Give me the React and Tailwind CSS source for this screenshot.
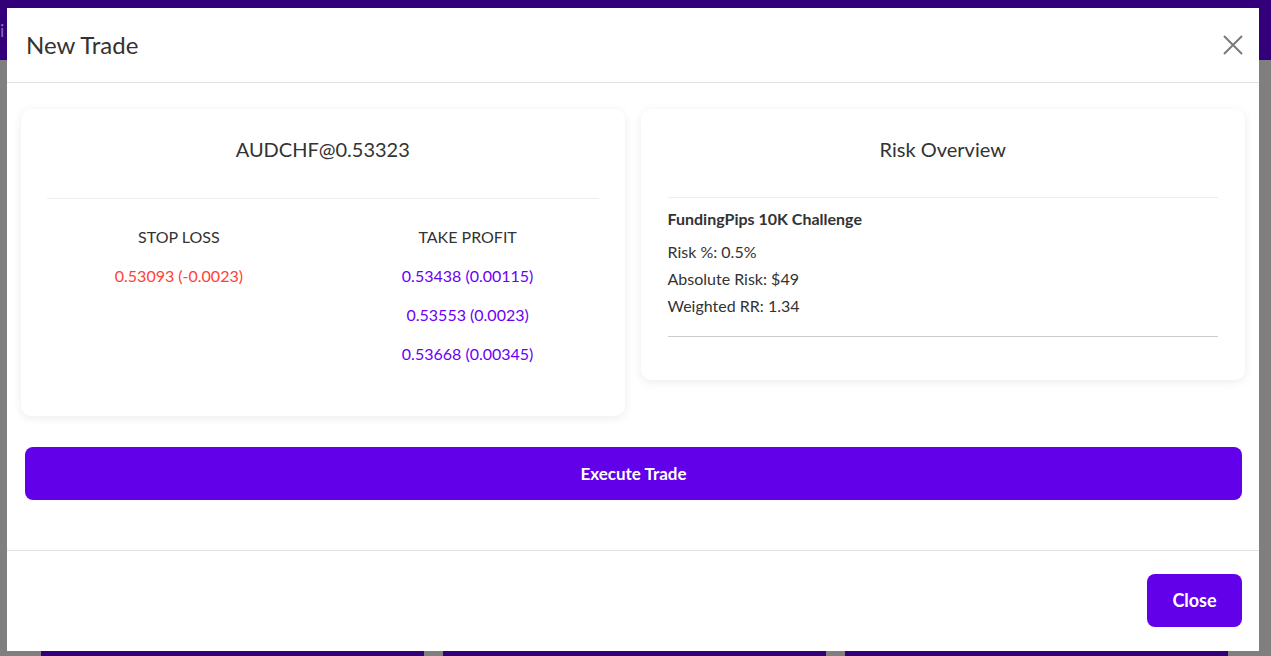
import React from "react";

const takeProfits = ["0.53438 (0.00115)", "0.53553 (0.0023)", "0.53668 (0.00345)"];

function CloseIcon() {
  return (
    <svg width="20" height="20" viewBox="0 0 20 20" className="text-[#7a7a7a]">
      <path d="M1 1 L19 19 M19 1 L1 19" stroke="currentColor" strokeWidth="2" fill="none" />
    </svg>
  );
}

export default function App() {
  return (
    <div className="relative h-[656px] w-full overflow-hidden bg-[#7f7f7f] font-['Lato',sans-serif]">
      {/* page behind the backdrop */}
      <div className="h-[60px] bg-[#33007a] text-[#7f6fa8] text-lg pl-0 pt-4">i</div>
      <div className="grid grid-cols-3 gap-[19px] pl-[41px] pr-[43px] pt-[580px]">
        <div className="h-[20px] bg-[#33007a]" />
        <div className="h-[20px] bg-[#33007a]" />
        <div className="h-[20px] bg-[#33007a]" />
      </div>

      {/* modal */}
      <div className="absolute left-[7px] top-[8px] flex h-[643px] w-[1252px] flex-col bg-white text-[#333]">
        <div className="flex h-[75px] items-center justify-between border-b border-[#dee2e6] pl-[19px] pr-[16px]">
          <h2 className="text-[24px] leading-none">New Trade</h2>
          <button className="p-0">
            <CloseIcon />
          </button>
        </div>

        <div className="flex-1 border-b border-[#dee2e6] px-[14px] pt-[26px]">
          <div className="flex items-start gap-[16px]">
            {/* trade card */}
            <div className="h-[307px] w-[604px] rounded-[10px] bg-white px-[26px] shadow-[0_2px_10px_rgba(0,0,0,0.08)]">
              <div className="h-[89px] pt-[28px] text-center text-[20px] leading-[24px]">AUDCHF@0.53323</div>
              <div className="border-t border-[#eeeeee]" />
              <div className="grid grid-cols-2 pt-[28px] text-center text-[16px] leading-[20px]">
                <div className="flex flex-col items-center pr-[12px]">
                  <div className="uppercase">Stop Loss</div>
                  <div className="mt-[19px] text-[#ff4136]">0.53093 (-0.0023)</div>
                </div>
                <div className="flex flex-col items-center pl-[14px]">
                  <div className="uppercase">Take Profit</div>
                  <div className="mt-[19px] flex flex-col gap-[19px] text-[#6a00f4]">
                    {takeProfits.map((tp) => (
                      <div key={tp}>{tp}</div>
                    ))}
                  </div>
                </div>
              </div>
            </div>

            {/* risk card */}
            <div className="h-[271px] w-[605px] rounded-[10px] bg-white px-[27px] shadow-[0_2px_10px_rgba(0,0,0,0.08)]">
              <div className="h-[88px] pt-[28px] text-center text-[20px] leading-[24px]">Risk Overview</div>
              <div className="border-t border-[#eeeeee]" />
              <div className="pt-[11px] text-[16px] leading-[20px]">
                <div className="font-bold">FundingPips 10K Challenge</div>
                <div className="mt-[13px] flex flex-col gap-[7px]">
                  <div>Risk %: 0.5%</div>
                  <div>Absolute Risk: $49</div>
                  <div>Weighted RR: 1.34</div>
                </div>
              </div>
              <div className="mt-[20px] border-t border-[#cccccc]" />
            </div>
          </div>

          <button className="mx-[4px] mt-[31px] flex h-[53px] w-[1217px] items-center justify-center rounded-[8px] bg-[#6200ea] text-[17px] font-bold text-white">
            Execute Trade
          </button>
        </div>

        <div className="flex h-[100px] items-start justify-end pr-[17px] pt-[23px]">
          <button className="h-[53px] w-[95px] rounded-[8px] bg-[#6200ea] text-[18px] font-bold text-white">
            Close
          </button>
        </div>
      </div>
    </div>
  );
}
